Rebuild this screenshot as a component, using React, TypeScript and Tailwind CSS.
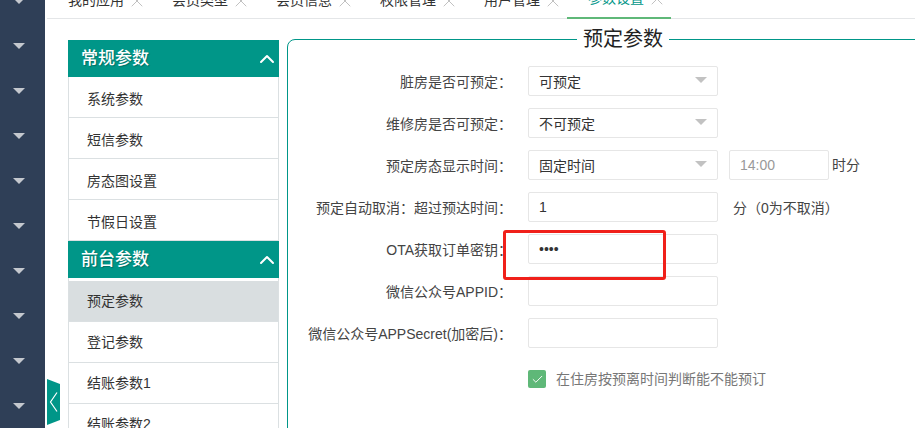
import { Check, ChevronUp, X } from 'lucide-react';

const tabs = ['我的应用', '会员类型', '会员信息', '权限管理', '用户管理', '参数设置'];
const groupOne = ['系统参数', '短信参数', '房态图设置', '节假日设置'];
const groupTwo = ['预定参数', '登记参数', '结账参数1', '结账参数2'];

const Triangle = ({ className }: { className: string }) => (
  <svg width="12" height="6" viewBox="0 0 12 6" className={className}>
    <path d="M0 0h12L6 6z" />
  </svg>
);

const Label = ({ text }: { text: string }) => (
  <label className="w-[224px] shrink-0 whitespace-nowrap pt-[6px] text-right text-[14px] leading-[20px] text-[#444]">{text}</label>
);

const boxClass =
  'flex h-[30px] w-[190px] shrink-0 items-center rounded-[2px] border border-[#e6e6e6] bg-white pl-[10px] pr-[10px] pt-[2px] text-[14px] text-[#333]';

const SelectBox = ({ value }: { value: string }) => (
  <div className={`${boxClass} justify-between`}>
    <span>{value}</span>
    <Triangle className="mb-[4px] fill-[#c2c2c2]" />
  </div>
);

const GroupHeader = ({ title }: { title: string }) => (
  <div className="flex h-[37px] items-center justify-between bg-[#009688] pl-[13px]">
    <span className="text-[17px] font-medium leading-[24px] text-white [text-shadow:1px_1px_1px_rgba(0,0,0,0.25)]">{title}</span>
    <ChevronUp size={24} strokeWidth={2} className="text-white" />
  </div>
);

const MenuItem = ({ text, active, low }: { text: string; active?: boolean; low?: boolean }) => (
  <div
    className={`flex h-[41px] items-center border-x border-b border-[#dbe0e2] pl-[18px] text-[14px] text-[#333] ${
      active ? 'bg-[#d9dee0]' : 'bg-white'
    } ${low ? 'pt-[4px]' : ''}`}
  >
    {text}
  </div>
);

export default function App() {
  return (
    <div className="relative flex h-[428px] w-[915px] overflow-hidden bg-white font-['Liberation_Sans','Noto_Sans_CJK_SC',sans-serif]">
      {/* Sidebar */}
      <div className="flex w-[45px] shrink-0 flex-col items-center bg-[#2f3f57]">
        <div className="-mt-[22px] flex flex-col pr-[7px]">
          {Array.from({ length: 10 }).map((_, i) => (
            <div key={i} className="flex h-[45px] items-center justify-center">
              <Triangle className="fill-[#c4c8ce]" />
            </div>
          ))}
        </div>
      </div>

      <div className="min-w-0 flex-1 pl-[2px]">
        {/* Tabs */}
        <div className="flex h-[19px] border-b border-[#e4e6e8]">
          {tabs.map((tab, i) => (
            <div
              key={tab}
              className={`flex h-[19px] w-[104px] shrink-0 items-end pb-[9px] pl-[21px] text-[14px] leading-[20px] ${
                i === 5 ? 'border-b-2 border-[#5fb878] text-[#009688]' : 'text-[#333]'
              }`}
            >
              <span className="whitespace-nowrap">{tab}</span>
              <X size={20} strokeWidth={1} className="mb-[-1px] ml-[3px] shrink-0 text-[#b4b4b4]" />
            </div>
          ))}
        </div>

        <div className="flex pl-[21px] pt-[21px]">
          {/* Left menu */}
          <div className="w-[211px] shrink-0">
            <GroupHeader title="常规参数" />
            {groupOne.map((t) => (
              <MenuItem key={t} text={t} low />
            ))}
            <GroupHeader title="前台参数" />
            <div className="h-[3px] border-x border-[#dbe0e2]" />
            {groupTwo.map((t, i) => (
              <MenuItem key={t} text={t} active={i === 0} />
            ))}
          </div>

          {/* Form */}
          <fieldset className="-mt-[15px] ml-[8px] h-[500px] w-[700px] shrink-0 rounded-tl-[8px] border border-[#009688]">
            <legend className="ml-[289px] px-[6px] text-[20px] leading-[28px] text-[#222]">预定参数</legend>
            <div className="flex flex-col gap-[12px] pt-[13px]">
              <div className="flex">
                <Label text="脏房是否可预定：" />
                <div className="ml-[16px]"><SelectBox value="可预定" /></div>
              </div>
              <div className="flex">
                <Label text="维修房是否可预定：" />
                <div className="ml-[16px]"><SelectBox value="不可预定" /></div>
              </div>
              <div className="flex">
                <Label text="预定房态显示时间：" />
                <div className="ml-[16px]"><SelectBox value="固定时间" /></div>
                <div className={`${boxClass} ml-[11px] !w-[100px] !pt-[1px] !text-[#999]`}>14:00</div>
                <span className="ml-[3px] pt-[5px] text-[14px] leading-[20px] text-[#444]">时分</span>
              </div>
              <div className="flex">
                <Label text="预定自动取消：超过预达时间：" />
                <div className="ml-[16px]"><div className={`${boxClass} !pt-[1px]`}>1</div></div>
                <span className="ml-[15px] pt-[6px] text-[14px] leading-[20px] text-[#444]">分（0为不取消）</span>
              </div>
              <div className="flex">
                <Label text="OTA获取订单密钥：" />
                <div className="ml-[16px]"><div className={`${boxClass} !pt-0 text-[#111]`}>••••</div></div>
              </div>
              <div className="flex">
                <Label text="微信公众号APPID：" />
                <div className="ml-[16px]"><div className={boxClass} /></div>
              </div>
              <div className="flex">
                <Label text="微信公众号APPSecret(加密后)：" />
                <div className="ml-[16px]"><div className={boxClass} /></div>
              </div>
              <div className="flex items-center pl-[240px] pt-[9px]">
                <span className="flex h-[18px] w-[18px] items-center justify-center rounded-[2px] bg-[#5fb878]">
                  <Check size={13} strokeWidth={1.75} className="text-white" />
                </span>
                <span className="ml-[10px] text-[14px] leading-[20px] text-[#777]">在住房按预离时间判断能不能预订</span>
              </div>
            </div>
          </fieldset>
        </div>
      </div>

      {/* Collapse handle */}
      <div className="absolute left-[47px] top-[379px] flex h-[46px] w-[13px] items-center justify-center bg-[#009688] [clip-path:polygon(0_0,100%_11%,100%_89%,0_100%)]">
        <svg width="9" height="20" viewBox="0 0 9 20" fill="none" stroke="white" strokeWidth="1.2" className="shrink-0">
          <path d="M8 .5 1.5 10 8 19.5" />
        </svg>
      </div>

      {/* Red annotation */}
      <div className="absolute left-[503px] top-[230px] h-[50px] w-[163px] rounded-[3px] border-[3px] border-[#f0201a]" />
    </div>
  );
}
